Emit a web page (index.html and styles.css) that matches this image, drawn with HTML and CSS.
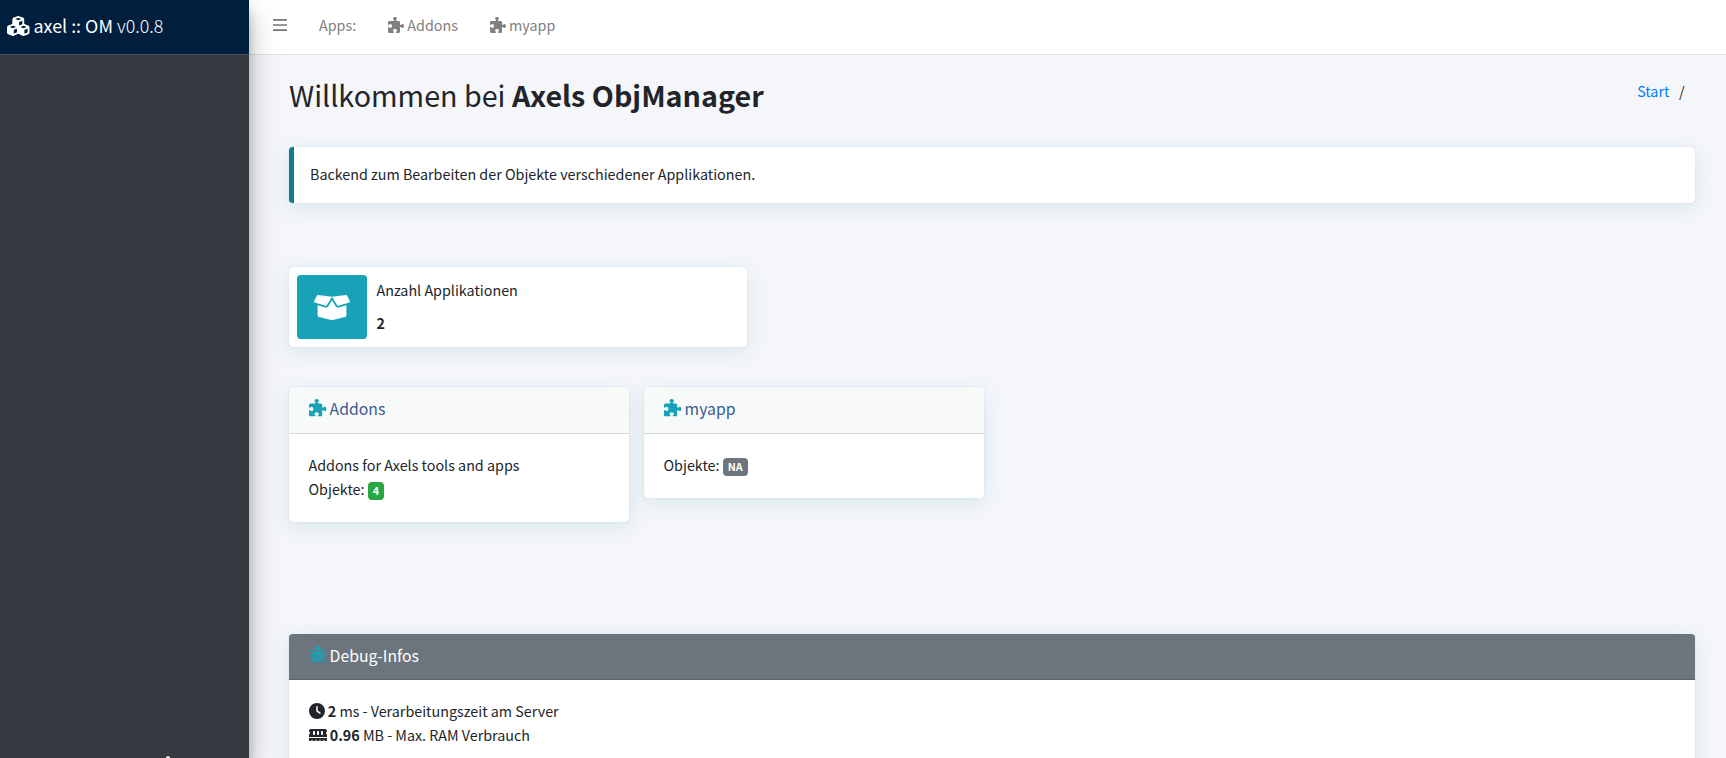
FILE: index.html
```
<!DOCTYPE html>
<html lang="de">
<head>
<meta charset="utf-8">
<title>Axels ObjManager</title>
<link rel="stylesheet" href="styles.css">
</head>
<body>
<svg class="defs" aria-hidden="true">
  <symbol id="puzzle" viewBox="0 0 512 512"><path d="M192 104.8c0-9.2-5.8-17.3-13.2-22.8C167.2 73.3 160 61.3 160 48c0-26.5 28.7-48 64-48s64 21.5 64 48c0 13.3-7.2 25.3-18.8 34c-7.4 5.5-13.2 13.6-13.2 22.8c0 12.8 10.4 23.2 23.2 23.2H336c26.5 0 48 21.5 48 48v56.8c0 12.8 10.4 23.2 23.2 23.2c9.2 0 17.3-5.8 22.8-13.2c8.7-11.6 20.7-18.8 34-18.8c26.5 0 48 28.7 48 64s-21.5 64-48 64c-13.3 0-25.3-7.2-34-18.8c-5.5-7.4-13.6-13.2-22.8-13.2c-12.8 0-23.2 10.4-23.2 23.2V464c0 26.5-21.5 48-48 48H279.2c-12.8 0-23.2-10.4-23.2-23.2c0-9.2 5.8-17.3 13.2-22.8c11.6-8.7 18.8-20.7 18.8-34c0-26.5-28.7-48-64-48s-64 21.5-64 48c0 13.3 7.2 25.3 18.8 34c7.4 5.5 13.2 13.6 13.2 22.8c0 12.8-10.4 23.2-23.2 23.2H48c-26.5 0-48-21.5-48-48V343.2C0 330.4 10.4 320 23.2 320c9.2 0 17.3 5.8 22.8 13.2C54.7 344.8 66.7 352 80 352c26.5 0 48-28.7 48-64s-21.5-64-48-64c-13.3 0-25.3 7.2-34 18.8C40.5 250.2 32.4 256 23.2 256C10.4 256 0 245.6 0 232.8V176c0-26.5 21.5-48 48-48H168.8c12.8 0 23.2-10.4 23.2-23.2z"/></symbol>
  <symbol id="open-box" viewBox="0 0 640 512"><path d="M425.7 256c-16.9 0-32.8-9-41.4-23.4L320 126l-64.2 106.6c-8.7 14.5-24.6 23.5-41.5 23.5-4.5 0-9-.6-13.3-1.9L64 215v178c0 14.7 10 27.5 24.2 31l216.2 54.1c10.2 2.5 20.9 2.5 31 0L551.8 424c14.2-3.6 24.2-16.4 24.2-31V215l-137 39.1c-4.3 1.3-8.8 1.9-13.3 1.9zm212.6-112.2L586.8 41c-3.1-6.2-9.8-9.8-16.7-8.9L320 64l91.7 152.1c3.8 6.3 11.4 9.3 18.5 7.3l197.9-56.5c9.9-2.9 14.7-13.9 10.2-23.1zM53.2 41L1.7 143.8c-4.6 9.2.3 20.2 10.1 23l197.9 56.5c7.1 2 14.7-1 18.5-7.3L320 64 69.8 32.1c-6.9-.8-13.5 2.7-16.6 8.9z"/></symbol>
</svg>
<div class="wrapper">
  <aside class="sidebar">
    <a class="brand"><svg class="icon brand-icon" viewBox="0 0 576 512"><path d="M290.8 48.6l78.4 29.7L288 109.5 206.8 78.3l78.4-29.7c1.8-.7 3.8-.7 5.7 0zM136 92.5V204.7c-1.3 .4-2.6 .8-3.9 1.3l-96 36.4C14.4 250.6 0 271.5 0 294.7V413.9c0 22.2 13.1 42.3 33.5 51.3l96 42.2c14.4 6.3 30.7 6.3 45.1 0L288 457.5l113.5 49.9c14.4 6.3 30.7 6.3 45.1 0l96-42.2c20.3-8.9 33.5-29.1 33.5-51.3V294.7c0-23.3-14.4-44.1-36.1-52.4l-96-36.4c-1.3-.5-2.6-.9-3.9-1.3V92.5c0-23.3-14.4-44.1-36.1-52.4l-96-36.4c-12.8-4.8-26.9-4.8-39.7 0l-96 36.4C150.4 48.4 136 69.3 136 92.5zM392 210.6l-82.4 31.2V152.6L392 121v89.6zM154.8 250.9l78.4 29.7L152 311.7 70.8 280.6l78.4-29.7c1.8-.7 3.8-.7 5.7 0zm18.8 204.4V354.8L256 323.2v95.9l-82.4 36.2zM421.2 250.9c1.8-.7 3.8-.7 5.7 0l78.4 29.7L424 311.7l-81.2-31.1 78.4-29.7zM523.2 421.2l-77.6 34.1V354.8L528 323.2v90.7c0 3.2-1.9 6-4.8 7.3z"/></svg> axel :: OM <span class="version">v0.0.8</span></a>
    <span class="pointer"></span>
  </aside>
  <div class="main">
    <nav class="topnav">
      <svg class="burger" viewBox="0 0 14 14"><path d="M0 1.8h14M0 7h14M0 12.2h14"/></svg>
      <span class="nav-link">Apps:</span>
      <a class="nav-link"><svg class="icon"><use href="#puzzle"/></svg> Addons</a>
      <a class="nav-link"><svg class="icon"><use href="#puzzle"/></svg> myapp</a>
    </nav>
    <div class="content">
      <header class="page-head">
        <h1>Willkommen bei <b>Axels ObjManager</b></h1>
        <div class="crumbs"><a>Start</a><span>/</span></div>
      </header>
      <div class="card callout">Backend zum Bearbeiten der Objekte verschiedener Applikationen.</div>
      <div class="card info-box">
        <div class="info-icon"><svg class="icon"><use href="#open-box"/></svg></div>
        <div class="info-text"><span>Anzahl Applikationen</span><b>2</b></div>
      </div>
      <div class="app-cards">
        <section class="card app">
          <div class="card-header"><svg class="icon teal"><use href="#puzzle"/></svg> Addons</div>
          <div class="card-body">Addons for Axels tools and apps<br>Objekte: <span class="badge green">4</span></div>
        </section>
        <section class="card app">
          <div class="card-header"><svg class="icon teal"><use href="#puzzle"/></svg> myapp</div>
          <div class="card-body">Objekte: <span class="badge">NA</span></div>
        </section>
      </div>
      <section class="card debug">
        <div class="card-header dark"><svg class="icon teal" viewBox="0 0 512 512"><path d="M168 118V88a88 88 0 0 1 176 0V118z"/><path d="M150 160H362Q384 210 384 300Q384 450 274 478V224H238V478Q128 450 128 300Q128 210 150 160Z"/><path class="legs" d="M155 205L50 120M357 205L462 120M140 290H22M372 290H490M155 375L58 480M357 375L454 480"/></svg> Debug-Infos</div>
        <div class="card-body">
          <div><svg class="icon" viewBox="0 0 512 512"><path d="M256 0a256 256 0 1 1 0 512A256 256 0 1 1 256 0zM232 120V256c0 8 4 15.5 10.7 20l96 64c11 7.4 25.9 4.4 33.3-6.7s4.4-25.9-6.7-33.3L280 243.2V120c0-13.3-10.7-24-24-24s-24 10.7-24 24z"/></svg> <b>2</b> ms - Verarbeitungszeit am Server</div>
          <div><svg class="icon wide" viewBox="0 0 576 512"><path fill-rule="evenodd" d="M64 64C28.7 64 0 92.7 0 128v7.4c0 6.8 4.4 12.6 10.1 16.3C23.3 160.3 32 175.1 32 192s-8.7 31.7-21.9 40.3C4.4 236 0 241.8 0 248.6V320H576V248.6c0-6.8-4.4-12.6-10.1-16.3C552.7 223.7 544 208.9 544 192s8.7-31.7 21.9-40.3c5.7-3.7 10.1-9.5 10.1-16.3V128c0-35.3-28.7-64-64-64H64zM576 352H0v64c0 17.7 14.3 32 32 32H80V416c0-8.8 7.2-16 16-16s16 7.2 16 16v32h96V416c0-8.8 7.2-16 16-16s16 7.2 16 16v32h96V416c0-8.8 7.2-16 16-16s16 7.2 16 16v32h96V416c0-8.8 7.2-16 16-16s16 7.2 16 16v32h48c17.7 0 32-14.3 32-32V352zM192 160v64c0 17.7-14.3 32-32 32s-32-14.3-32-32V160c0-17.7 14.3-32 32-32s32 14.3 32 32zM320 160v64c0 17.7-14.3 32-32 32s-32-14.3-32-32V160c0-17.7 14.3-32 32-32s32 14.3 32 32zM448 160v64c0 17.7-14.3 32-32 32s-32-14.3-32-32V160c0-17.7 14.3-32 32-32s32 14.3 32 32z"/></svg> <b>0.96</b> MB - Max. RAM Verbrauch</div>
        </div>
      </section>
    </div>
  </div>
</div>
</body>
</html>
```
FILE: styles.css
```
* { box-sizing: border-box; }
body { margin: 0; height: 758px; overflow: hidden; background: #f4f6f9; color: #212529; font: 400 14.32px/24px "Source Sans Pro", "Noto Sans CJK SC", sans-serif; }
h1 { margin: 0; font-size: 28.7px; font-weight: 400; line-height: 36px; }
b { font-weight: 700; }
.defs { display: none; }
.icon { width: 16px; height: 16px; fill: currentColor; vertical-align: -2px; overflow: visible; }
.icon.wide { width: 18px; }
.wrapper { display: flex; height: 758px; overflow: hidden; }
.sidebar { position: relative; width: 249px; flex: none; background: #343a40; box-shadow: 0 14px 28px rgba(0,0,0,.25), 0 10px 10px rgba(0,0,0,.22); z-index: 1; }
.brand { display: block; height: 55px; padding: 10px 7px; background: #001f3f; border-bottom: 1px solid #4b545c; color: #fff; font-size: 17.9px; line-height: 30px; white-space: nowrap; }
.brand-icon { width: 22.5px; height: 20px; vertical-align: -2.5px; }
.version { font-weight: 300; }
.pointer { position: absolute; left: 166px; bottom: 0; width: 4px; height: 2px; border-radius: 2px 2px 0 0; background: #e8e8e8; }
.main { flex: 1; min-width: 0; }
.topnav { display: flex; align-items: center; height: 55px; padding: 0 24px 4px; background: #fff; border-bottom: 1px solid #dee2e6; color: #808080; }
.burger { width: 14px; height: 14px; stroke: #777; stroke-width: 1.7; margin-right: 32px; }
.nav-link { margin-right: 32px; }
.content { padding: 22px 31px 0 40px; }
.page-head { display: flex; justify-content: space-between; height: 70px; }
.crumbs { display: flex; gap: 9.5px; padding: 2px 10.5px 0 0; }
.crumbs a { color: #007bff; }
.card { background: #fff; border-radius: 4px; box-shadow: 0 0 1px rgba(0,80,120,.3), 0 5px 20px rgba(0,120,160,.12); }
.callout { height: 56px; padding: 15px 16px; border-left: 5px solid #117a8b; }
.info-box { display: flex; width: 458px; height: 80px; margin-top: 64px; padding: 8px; }
.info-icon { display: flex; align-items: center; justify-content: center; width: 70px; height: 64px; border-radius: 4px; background: #17a2b8; color: #fff; }
.info-icon .icon { width: 36px; height: 29px; }
.info-text { display: flex; flex-direction: column; gap: 9px; padding: 3px 9.5px; }
.app-cards { display: flex; align-items: flex-start; gap: 15px; margin-top: 40px; height: 247px; }
.app { width: 340px; }
.card-header { height: 47px; padding: 9px 19.5px; border-bottom: 1px solid #d5dadd; border-radius: 4px 4px 0 0; background: #f8faf9; color: #3a5a8f; font-size: 15.75px; line-height: 26px; }
.card-header .icon { width: 17.6px; height: 17.6px; }
.card-body { padding: 19px 19.5px 21px; }
.teal { color: #17a2b8; }
.badge { display: inline-block; padding: 3px 5px; border-radius: 4px; background: #6c757d; color: #fff; font-size: 10.74px; font-weight: 700; line-height: 12px; vertical-align: baseline; }
.green { background: #28a745; }
.dark { height: 46px; background: #6c757d; color: #fff; border-color: #5b6269; }
.debug { height: 160px; }
.legs { fill: none; stroke: currentColor; stroke-width: 44; stroke-linecap: round; }
```
